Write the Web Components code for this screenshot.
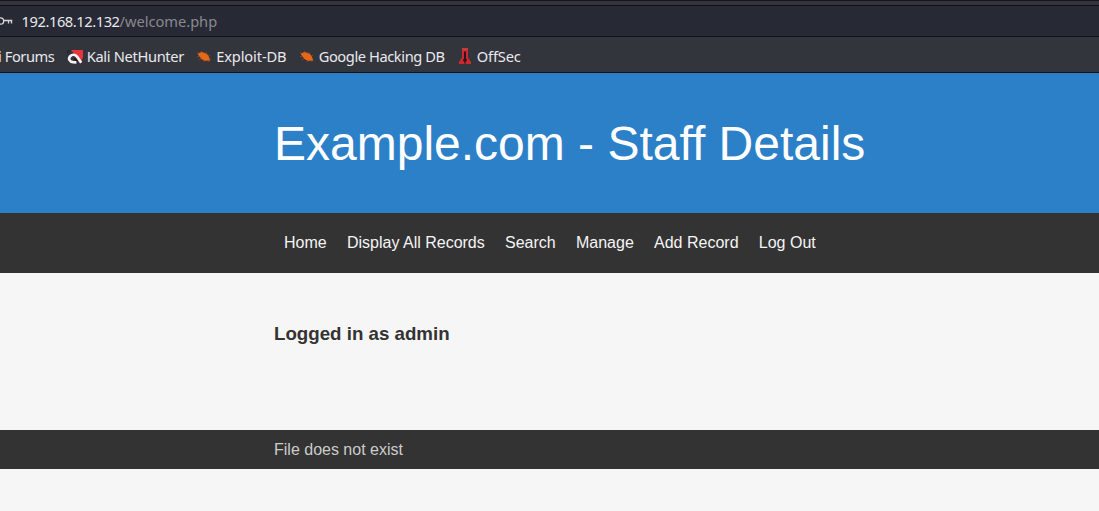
<!DOCTYPE html>
<html lang="en"><head><meta charset="utf-8"><title>Staff Details</title>
<style>html,body{margin:0;height:100%;overflow:hidden;background:#f6f6f6}</style></head>
<body>
<browser-bar>
<bookmark-link style="letter-spacing:-.43px;margin-left:-2px">i Forums</bookmark-link>
<bookmark-link icon="nethunter" style="letter-spacing:-.33px">Kali NetHunter</bookmark-link>
<bookmark-link icon="bug" style="letter-spacing:-.13px">Exploit-DB</bookmark-link>
<bookmark-link icon="bug" style="letter-spacing:-.42px">Google Hacking DB</bookmark-link>
<bookmark-link icon="offsec" style="letter-spacing:-.18px">OffSec</bookmark-link>
</browser-bar>
<staff-page>
<span slot="title">Example.com - Staff Details</span>
<nav-link>Home</nav-link><nav-link>Display All Records</nav-link><nav-link>Search</nav-link><nav-link>Manage</nav-link><nav-link>Add Record</nav-link><nav-link>Log Out</nav-link>
<span slot="status">Logged in as admin</span>
<span slot="footer">File does not exist</span>
</staff-page>
<script>
const define=(name,html)=>customElements.define(name,class extends HTMLElement{
  constructor(){super();this.attachShadow({mode:'open'}).innerHTML=html;}
});
const icons={
nethunter:'<svg width="16" height="16" viewBox="0 0 16 16"><g transform="translate(0 2)"><path fill="#e8343b" d="M4 0h12v7l-2 5z"/><path fill="#1b1d24" d="M0 0h4L2 3 0 5z" opacity=".45"/><path fill="none" stroke="#24181e" stroke-width="2.2" d="M10.500 11 7.500 8.500"/><path fill="none" stroke="#f7f2f5" stroke-width="2.7" d="M14.2 12.800 10 6.600C8.400 4.400 5.300 4 3.200 6.200.900 8.700 2.600 11.900 6 12.200l3.400.1"/></g></svg>',
bug:'<svg width="16" height="16" viewBox="0 0 16 16"><path stroke="#94482c" stroke-width=".8" fill="none" d="m1 4.500 3.500 2M5 3l2 2M1 9l4-1.500M3 12l3-2M10 4l1 3M14 7l-3 2M8 14l2-3M14.500 11l-4-1M13 14l-2-3"/><path fill="#e66716" d="M1.800 6.200C3.800 3.900 6.600 3.900 9.200 5.200c2.800 1.300 4.200 3.400 4.200 5.500l1 2-2.600-.3c-3 .9-6-.4-7.500-2.900z"/></svg>',
offsec:'<svg width="16" height="16" viewBox="0 0 16 16"><g transform="translate(0 .5)"><path fill="#c9292f" d="M5 0h6v9l3 4.500V16H2v-2.500L5 9z"/><path fill="#301319" d="M7 3h2v7l1.300 2L8.700 13v2H7.300v-2l-1.600-1L7 10z"/><path stroke="#ed4e50" d="M5 .5h6" fill="none"/></g></svg>'
};
customElements.define('bookmark-link',class extends HTMLElement{
  connectedCallback(){
    const icon=icons[this.getAttribute('icon')]||'';
    this.attachShadow({mode:'open'}).innerHTML=`<style>:host{display:flex;align-items:center;gap:4px;white-space:nowrap}svg{display:block;flex:none}</style>${icon}<span><slot></slot></span>`;
  }
});
define('nav-link',`<style>:host{display:block;white-space:nowrap}</style><slot></slot>`);
define('browser-bar',`<style>
:host{display:block;height:73px;font:14.67px/20px "Noto Sans",sans-serif;color:#e9e9ed;background:#33353d}
.edge{box-sizing:border-box;height:6px;border-top:1px solid #14151c;border-bottom:1px solid #0e0f17}
.address{height:31px;box-sizing:border-box;border-bottom:1px solid #10111a;background:#272935;display:flex;align-items:center;gap:7.6px}
.address svg{display:block;flex:none}.host{letter-spacing:-.43px}.path{color:#88898f;letter-spacing:-.03px}
.bookmarks{height:36px;box-sizing:border-box;border-bottom:1px solid #12131b;padding-top:3px;display:flex;align-items:center;gap:12.2px}
</style><div class="edge"></div><div class="address"><svg width="14" height="16" viewBox="0 0 14 16" fill="none" stroke="#d8d8dd" stroke-width="1.3"><circle cx=".5" cy="8" r="3.2"/><path d="M3.500 7.500H12.300M8.500 7.500v3M11.500 7.500v3"/></svg><span><span class="host">192.168.12.132</span><span class="path">/welcome.php</span></span></div><div class="bookmarks"><slot></slot></div>`);
define('staff-page',`<style>
:host{display:block;font:16px/20px "Liberation Sans",Arial,sans-serif;color:#333}
.inner{box-sizing:border-box;width:551px;margin:0 auto;white-space:nowrap}
header{height:140px;box-sizing:border-box;padding-top:2px;background:#2c80c8;color:#fff;display:flex;align-items:center}
h1{font-size:48px;line-height:56px;font-weight:400}
nav{height:60px;background:#333;color:#f5f5f5;display:flex;align-items:center}
nav .inner{display:flex;gap:20.25px;padding-left:10px}
main{height:157px;box-sizing:border-box;padding-top:50px}
h3{font-size:18.72px;line-height:22px}
footer{height:39px;background:#333;color:#ccc;display:flex;align-items:center}
</style><header><h1 class="inner"><slot name="title"></slot></h1></header>
<nav><div class="inner"><slot></slot></div></nav>
<main><h3 class="inner"><slot name="status"></slot></h3></main>
<footer><div class="inner"><slot name="footer"></slot></div></footer>`);
</script>
</body></html>
